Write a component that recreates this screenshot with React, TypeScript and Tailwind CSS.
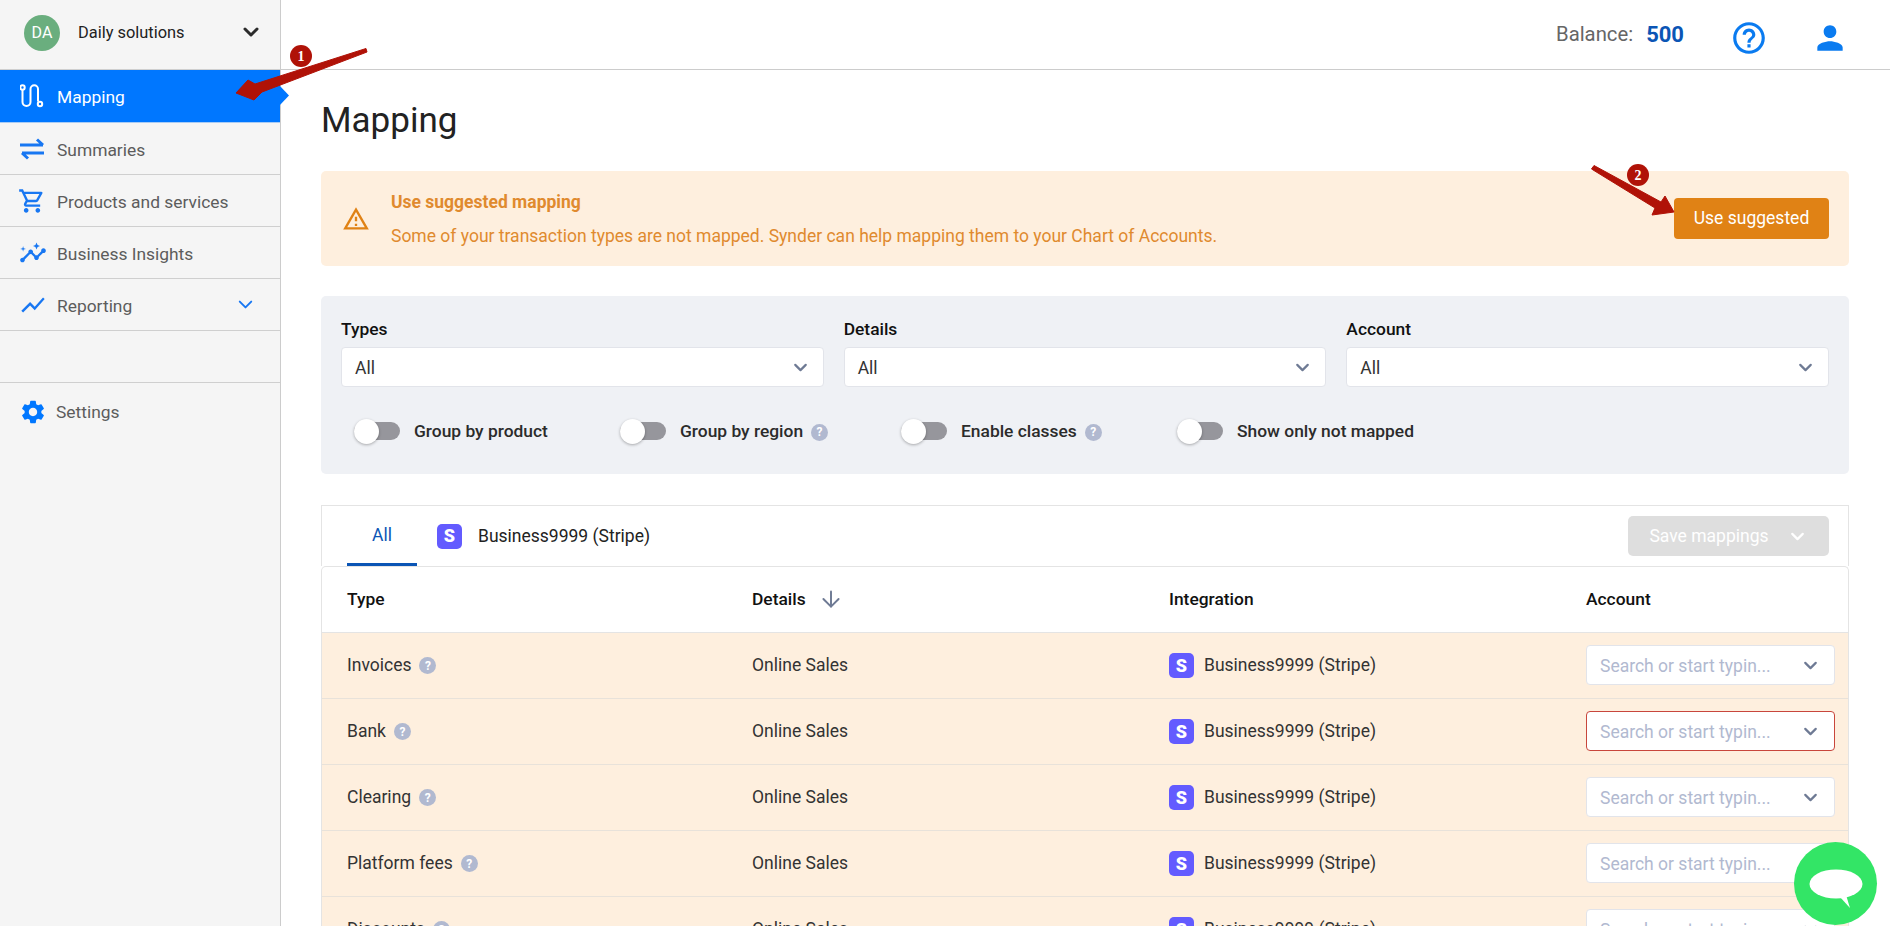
import { ChevronDown, ArrowDown } from 'lucide-react'
import { MdInsights, MdHelpOutline, MdOutlineShoppingCart, MdOutlineWarningAmber, MdPerson, MdSettings, MdShowChart } from 'react-icons/md'

const rows = [
  { type: 'Invoices', error: false },
  { type: 'Bank', error: true },
  { type: 'Clearing', error: false },
  { type: 'Platform fees', error: false },
  { type: 'Discounts', error: false },
]

function Help() {
  return (
    <span className="inline-flex h-[17px] w-[17px] shrink-0 items-center justify-center rounded-full bg-[#b1b9d0] text-[12px] font-bold leading-none text-white">
      ?
    </span>
  )
}

function StripeIcon() {
  return (
    <span className="flex h-[25px] w-[25px] shrink-0 items-center justify-center rounded-[5px] bg-[#635bff] text-[18px] font-black leading-none text-white">
      S
    </span>
  )
}

function Toggle({ label, help, className }: { label: string; help?: boolean; className: string }) {
  return (
    <div className={`flex items-center ${className}`}>
      <div className="relative h-[18px] w-[46px] shrink-0 rounded-full bg-[#96969c]">
        <div className="absolute -top-[3px] left-0 h-[25px] w-[25px] rounded-full bg-white shadow-[0_1px_3px_rgba(0,0,0,0.3)]" />
      </div>
      <span className="ml-[14px] text-[17.4px] font-medium text-[#2b2b2b]">{label}</span>
      {help && <span className="ml-[8px]"><Help /></span>}
    </div>
  )
}

function FilterSelect({ label }: { label: string }) {
  return (
    <div className="flex-1">
      <div className="mb-[7px] h-[22px] text-[17.4px] font-medium leading-[22px] text-[#111]">{label}</div>
      <div className="flex h-[40px] items-center justify-between rounded-[4px] border border-[#e2e4ea] bg-white pl-[13px] pr-[12px] text-[17.5px] text-[#333]">
        <span className="pt-[2px]">All</span>
        <ChevronDown size={21} strokeWidth={2.5} className="text-[#6e7a94]" />
      </div>
    </div>
  )
}

function NavItem({ icon, label, right }: { icon: React.ReactNode; label: string; right?: React.ReactNode }) {
  return (
    <div className="flex h-[52px] items-center border-b border-[#cfcfcf] pl-[20px] pr-[23px] text-[17.4px] text-[#5c5c5c]">
      <span className="flex w-[37px] shrink-0 items-center">{icon}</span>
      <span className="flex-1 pt-[3px]">{label}</span>
      {right}
    </div>
  )
}

export default function App() {
  return (
    <div className="relative flex h-[926px] w-[1890px] overflow-hidden bg-white font-['Roboto',sans-serif]">
      <aside className="w-[281px] shrink-0 border-r border-[#cccccc] bg-[#f5f5f5]">
        <div className="flex h-[70px] items-center border-b border-[#cfcfcf] pb-[3px] pl-[24px] pr-[17px]">
          <div className="flex h-[36px] w-[36px] items-center justify-center rounded-full bg-[#6aae7e] text-[16px] text-white">DA</div>
          <span className="ml-[18px] flex-1 text-[16.4px] text-[#222]">Daily solutions</span>
          <ChevronDown size={24} strokeWidth={3} className="mb-[2px] text-[#2b2b2b]" />
        </div>
        <div className="relative flex h-[53px] items-center border-b border-[#a9ccf5] bg-[#0077ff] pl-[20px] text-[17.4px] text-white">
          <svg width="24" height="24" viewBox="0 0 24 24" fill="none" stroke="white" strokeWidth="2" className="mr-[13px]">
            <circle cx="2.5" cy="3.5" r="2.2" />
            <circle cx="20" cy="20" r="2.2" />
            <path d="M2.5 6v12a4 4 0 0 0 8 0V5a3.7 3.7 0 0 1 7.5 0v12.5" />
          </svg>
          <span className="pt-[3px]">Mapping</span>
          <div className="absolute right-[-9px] top-[15px] h-[21px] w-[10px] bg-[#0077ff] [clip-path:polygon(0_0,100%_50%,0_100%)]" />
        </div>
        <NavItem
          label="Summaries"
          icon={
            <svg width="25" height="22" viewBox="0 0 25 22" fill="none" stroke="#1877f2" strokeWidth="3">
              <path d="M0 7h23M17 1.5l6 5.5" />
              <path d="M24 15H2M8 20.5 2 15" />
            </svg>
          }
        />
        <NavItem label="Products and services" icon={<MdOutlineShoppingCart size={28} className="-ml-[2px] text-[#1877f2]" />} />
        <NavItem label="Business Insights" icon={<MdInsights size={28} className="-ml-[1px] text-[#1877f2]" />} />
        <NavItem
          label="Reporting"
          icon={<MdShowChart size={28} className="-ml-[1px] text-[#1877f2]" />}
          right={<ChevronDown size={23} strokeWidth={2} className="text-[#1877f2]" />}
        />
        <div className="h-[52px] border-b border-[#cfcfcf]" />
        <div className="flex h-[58px] items-center pl-[20px] text-[17.4px] text-[#5c5c5c]">
          <span className="flex w-[36px] shrink-0 items-center"><MdSettings size={28} className="-ml-[1px] text-[#0077ff]" /></span>
          Settings
        </div>
      </aside>

      <div className="flex min-w-0 flex-1 flex-col">
        <header className="flex h-[70px] shrink-0 items-center justify-end border-b border-[#cccccc] pr-[41px] pt-[6px]">
          <span className="mb-[6px] text-[20.3px] text-[#666]">Balance:</span>
          <span className="mb-[6px] ml-[13px] text-[22px] font-bold text-[#0b55b5]">500</span>
          <MdHelpOutline size={38} className="ml-[46px] text-[#0a7bf0]" />
          <MdPerson size={38} className="ml-[43px] text-[#0a7bf0]" />
        </header>

        <main className="flex-1 pl-[40px] pr-[41px]">
          <h1 className="mt-[26px] h-[50px] text-[35px] leading-[50px] text-[#222]">Mapping</h1>

          <div className="mt-[25px] flex h-[95px] items-center rounded-[5px] bg-[#feefde] pl-[21px] pr-[20px]">
            <MdOutlineWarningAmber size={28} className="text-[#e08215]" />
            <div className="ml-[21px] flex-1 text-[#e08a2e]">
              <div className="text-[17.5px] font-bold leading-[24px]">Use suggested mapping</div>
              <div className="mt-[10px] text-[17.5px] leading-[24px]">Some of your transaction types are not mapped. Synder can help mapping them to your Chart of Accounts.</div>
            </div>
            <div className="flex h-[41px] w-[155px] items-center justify-center rounded-[4px] bg-[#e08215] text-[17.5px] text-white">Use suggested</div>
          </div>

          <div className="mt-[30px] h-[178px] rounded-[5px] bg-[#eff1f5] px-[20px] pt-[22px]">
            <div className="flex gap-[20px]">
              <FilterSelect label="Types" />
              <FilterSelect label="Details" />
              <FilterSelect label="Account" />
            </div>
            <div className="mt-[31px] flex">
              <Toggle label="Group by product" className="ml-[13px] w-[266px]" />
              <Toggle label="Group by region" help className="w-[281px]" />
              <Toggle label="Enable classes" help className="w-[276px]" />
              <Toggle label="Show only not mapped" className="" />
            </div>
          </div>

          <div className="mt-[31px] flex h-[61px] items-stretch border border-b-0 border-[#e4e4e4] pl-[25px] pr-[19px]">
            <div className="flex w-[70px] items-center justify-center border-b-[3px] border-[#0b55b5] pt-[2px] text-[17.5px] text-[#0b55b5]">All</div>
            <div className="ml-[20px] flex items-center gap-[16px] text-[17.5px] text-[#222]">
              <StripeIcon />
              <span className="pt-[1px]">Business9999 (Stripe)</span>
            </div>
            <div className="ml-auto mt-[10px] flex h-[40px] w-[201px] items-center justify-center gap-[18px] rounded-[5px] bg-[#dedede] text-[17.5px] text-white">
              Save mappings
              <ChevronDown size={21} strokeWidth={2.5} />
            </div>
          </div>

          <div className="rounded-t-[5px] border border-b-0 border-[#e4e4e4]">
            <div className="grid h-[66px] grid-cols-[405px_417px_417px_1fr] items-center border-b border-[#e4e4e4] pl-[25px] text-[17.4px] font-medium text-[#111]">
              <span>Type</span>
              <span className="flex items-center gap-[12px]">
                Details
                <ArrowDown size={26} strokeWidth={1.8} className="text-[#6e7a94]" />
              </span>
              <span>Integration</span>
              <span>Account</span>
            </div>
            {rows.map((r) => (
              <div key={r.type} className="grid h-[66px] grid-cols-[405px_417px_417px_1fr] items-center border-b border-[#e8e2da] bg-[#feefde] pl-[25px] text-[17.5px] text-[#333]">
                <span className="flex items-center gap-[8px]">
                  {r.type}
                  <Help />
                </span>
                <span>Online Sales</span>
                <span className="flex items-center gap-[10px]">
                  <StripeIcon />
                  Business9999 (Stripe)
                </span>
                <div className={`mb-[1px] flex h-[40px] w-[249px] items-center justify-between rounded-[4px] border bg-white pl-[13px] pr-[13px] text-[#b1b9d0] ${r.error ? 'border-[#c8463c]' : 'border-[#e2e4ea]'}`}>
                  <span className="pt-[2px]">Search or start typin...</span>
                  <ChevronDown size={21} strokeWidth={2.5} className="text-[#6e7a94]" />
                </div>
              </div>
            ))}
          </div>
        </main>
      </div>

      {/* annotation arrows drawn over the screenshot */}
      <svg className="absolute left-[230px] top-[40px]" width="150" height="70" viewBox="0 0 150 70">
        <path d="M136 8.5 L137 12 L32 52 L24 60 L6 53 L18 40 L25 44 Z" fill="#b01207" stroke="#b01207" strokeWidth="1" strokeLinejoin="round" />
      </svg>
      <div className="absolute left-[290px] top-[45px] flex h-[22px] w-[22px] items-center justify-center rounded-full bg-[#b01207] font-['Liberation_Serif',serif] text-[14px] font-bold text-white">1</div>
      <svg className="absolute left-[1585px] top-[160px]" width="95" height="60" viewBox="0 0 95 60">
        <path d="M9 5.5 L76 42 L80 36 L89 52 L67 55 L70 48 L6.5 9 Z" fill="#b01207" stroke="#b01207" strokeWidth="1" strokeLinejoin="round" />
      </svg>
      <div className="absolute left-[1627px] top-[164px] flex h-[22px] w-[22px] items-center justify-center rounded-full bg-[#b01207] font-['Liberation_Serif',serif] text-[14px] font-bold text-white">2</div>

      <div className="absolute left-[1794px] top-[842px] flex h-[83px] w-[83px] items-center justify-center rounded-full bg-[#33e566]">
        <svg width="54" height="50" viewBox="0 0 54 50" fill="white">
          <ellipse cx="27" cy="25" rx="26.5" ry="14.5" />
          <path d="M31 38 L41 49 L37 36 Z" />
        </svg>
      </div>
    </div>
  )
}
